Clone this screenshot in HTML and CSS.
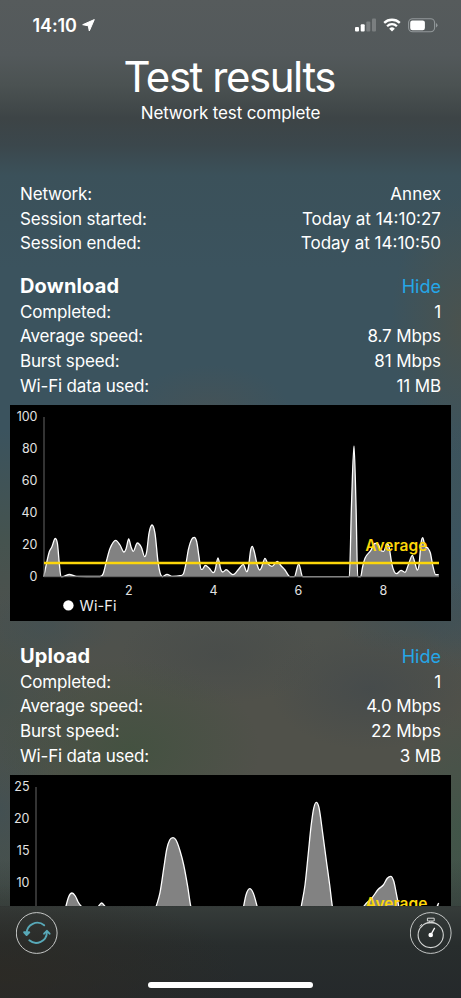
FILE: index.html
```html
<!DOCTYPE html>
<html lang="en">
<head>
<meta charset="utf-8">
<meta name="viewport" content="width=device-width, initial-scale=1">
<title>Test results</title>
<link rel="stylesheet" href="styles.css">
</head>
<body>
<div class="screen">
  <div class="statusbar">
    <div class="clock">
      <span>14:10</span>
      <svg width="13" height="13" viewBox="0 0 13 13"><path d="M12.3.6 7.300 12 6.300 6.800.7 5.700Z" fill="#fff" stroke="#fff" stroke-width="1" stroke-linejoin="round"/></svg>
    </div>
    <div class="indicators">
      <svg width="22" height="14" viewBox="0 0 22 14" fill="#fff"><rect x="0" y="9" width="4" height="4.6" rx="1"/><rect x="5.7" y="6.3" width="4" height="7.3" rx="1"/><g opacity=".22"><rect x="11.3" y="3.4" width="4" height="10.2" rx="1"/><rect x="17" y=".4" width="4" height="13.2" rx="1"/></g></svg>
      <svg class="wifi" width="18" height="14" viewBox="0 0 18 14"><g fill="none" stroke="#fff" stroke-width="2.3"><path d="M1.2 4.900a11.2 11.2 0 0 1 15.6 0"/><path d="M4.1 8.2a7 7 0 0 1 9.8 0"/></g><path d="M9 13.6 6.2 10.7a4 4 0 0 1 5.6 0Z" fill="#fff"/></svg>
      <svg width="30" height="15" viewBox="0 0 30 15"><rect x=".6" y=".8" width="26" height="13" rx="4" fill="none" stroke="#92989a" stroke-width="1.1"/><rect x="2.2" y="2.5" width="14.7" height="9.7" rx="2.2" fill="#fff"/><path d="M28 5v4.600q1.500-.8 1.500-2.300t-1.500-2.300Z" fill="#92989a"/></svg>
    </div>
  </div>

  <header class="title">
    <h1>Test results</h1>
    <p>Network test complete</p>
  </header>

  <main class="results">
    <dl class="rows session">
      <div><dt>Network:</dt><dd>Annex</dd></div>
      <div><dt>Session started:</dt><dd>Today at 14:10:27</dd></div>
      <div><dt>Session ended:</dt><dd>Today at 14:10:50</dd></div>
    </dl>

    <section>
      <div class="heading"><h2>Download</h2><a>Hide</a></div>
      <dl class="rows">
        <div><dt>Completed:</dt><dd>1</dd></div>
        <div><dt>Average speed:</dt><dd>8.7 Mbps</dd></div>
        <div><dt>Burst speed:</dt><dd>81 Mbps</dd></div>
        <div><dt>Wi-Fi data used:</dt><dd>11 MB</dd></div>
      </dl>
      <svg class="chart" viewBox="0 0 441 216">
        <path id="download-area" class="area"/>
        <path id="download-line" class="line"/>
        <path class="axis" d="M34 12V171.700H429"/>
        <g class="ticks y">
          <text x="27.500" y="16">100</text><text x="27.500" y="48">80</text><text x="27.500" y="80">60</text><text x="27.500" y="112">40</text><text x="27.500" y="144">20</text><text x="27.500" y="176">0</text>
        </g>
        <g class="ticks x">
          <text x="118.700" y="189.500">2</text><text x="203.500" y="189.500">4</text><text x="288.500" y="189.500">6</text><text x="373.300" y="189.500">8</text>
        </g>
        <path class="mean" d="M34 158H429"/>
        <text class="mean-label" x="355.300" y="145.600" textLength="62">Average</text>
        <circle cx="58.400" cy="200.400" r="5.200" fill="#fff"/>
        <text class="legend" x="69.500" y="205.600" textLength="37">Wi-Fi</text>
      </svg>
    </section>

    <section>
      <div class="heading"><h2>Upload</h2><a>Hide</a></div>
      <dl class="rows">
        <div><dt>Completed:</dt><dd>1</dd></div>
        <div><dt>Average speed:</dt><dd>4.0 Mbps</dd></div>
        <div><dt>Burst speed:</dt><dd>22 Mbps</dd></div>
        <div><dt>Wi-Fi data used:</dt><dd>3 MB</dd></div>
      </dl>
      <svg class="chart" viewBox="0 0 441 216">
        <path id="upload-area" class="area"/>
        <path id="upload-line" class="line"/>
        <path class="axis" d="M26 12V171.700H429"/>
        <g class="ticks y">
          <text x="19.500" y="16">25</text><text x="19.500" y="48">20</text><text x="19.500" y="80">15</text><text x="19.500" y="112">10</text>
        </g>
        <text class="mean-label" x="355.300" y="133.600" textLength="62">Average</text>
      </svg>
    </section>
  </main>

  <footer class="toolbar">
    <svg width="42" height="42" viewBox="0 0 42 42" fill="none">
      <circle cx="20.700" cy="21" r="20.400" stroke="#c6c8c7" stroke-width="1"/>
      <g stroke="#58a9b8" stroke-width="1.900" stroke-linecap="round" stroke-linejoin="round">
        <path d="M28.200 13.300A10.700 10.700 0 0 0 10.600 21.500"/><path d="M8.100 20.300 10.600 23 13.300 20.300Z"/>
        <path d="M13.300 28.300A10.700 10.700 0 0 0 30.900 20.300"/><path d="M28.100 21.700 30.900 18.800 33.600 21.700"/>
      </g>
    </svg>
    <svg width="42" height="42" viewBox="0 0 42 42" fill="none" stroke="#d4d6d5">
      <circle cx="20.700" cy="21" r="20.400" stroke-width=".9"/>
      <circle cx="20.700" cy="23" r="12.600" stroke-width="1.100"/>
      <path d="M17.400 6.200h6.800v2.800h-6.800ZM19.600 9v2M22 9v2M17.200 10.900h7.200M9.700 14.400l2.300-2.200M11.200 15.200l1.600-1.600" stroke-width="1"/>
      <path d="M20.700 23 24.700 15.900" stroke="#fff" stroke-width="1.300"/><circle cx="20.700" cy="23" r="2.300" fill="#fff" stroke="none"/>
    </svg>
  </footer>
  <div class="home"></div>
</div>
<script src="charts.js"></script>
</body>
</html>
```
FILE: styles.css
```css
* { box-sizing: border-box; margin: 0; padding: 0; }

body { font-family: Inter, "Liberation Sans", sans-serif; color: #fff; }

.screen {
  width: 461px;
  height: 998px;
  overflow: hidden;
  display: flex;
  flex-direction: column;
  background:
    linear-gradient(to bottom, transparent 860px, rgba(40, 44, 44, .35) 906px, transparent 907px),
    radial-gradient(ellipse 240px 90px at 0 975px, rgba(45, 42, 36, .8), transparent),
    linear-gradient(to bottom, transparent 906px, #363c3a 906px, #282d2d 945px, #25292b 998px),
    radial-gradient(ellipse 130px 90px at 130px 750px, rgba(64, 82, 62, .75), transparent),
    radial-gradient(ellipse 100px 60px at 370px 690px, rgba(68, 74, 76, .8), transparent),
    radial-gradient(ellipse 100px 50px at 220px 655px, rgba(72, 76, 74, .8), transparent),
    radial-gradient(ellipse 90px 40px at 420px 618px, rgba(62, 80, 86, .7), transparent),
    radial-gradient(ellipse 70px 40px at 45px 625px, rgba(64, 80, 84, .6), transparent),
    radial-gradient(ellipse 90px 100px at 0 700px, rgba(68, 80, 76, .8), transparent),
    radial-gradient(ellipse 70px 120px at 461px 830px, rgba(62, 86, 72, .8), transparent),
    radial-gradient(ellipse 60px 90px at 0 810px, rgba(64, 80, 84, .8), transparent),
    radial-gradient(ellipse 70px 130px at 461px 325px, rgba(78, 82, 74, .8), transparent),
    radial-gradient(ellipse 80px 45px at 210px 410px, rgba(78, 82, 80, .5), transparent),
    radial-gradient(ellipse 60px 130px at 461px 545px, rgba(58, 84, 98, .9), transparent),
    linear-gradient(to bottom, #565b5c 0, #53595b 55px, #4b5252 85px, #3d4446 118px, #3b474c 145px, #3b515a 175px, #3b535e 270px, #3b535e 430px, #45534f 540px, #4d514d 620px, #50514a 700px, #50514a 800px, #44504b 906px);
}

.statusbar {
  height: 54px;
  padding: 0 23px 0 32.500px;
  display: flex;
  justify-content: space-between;
}
.clock { display: flex; align-items: flex-start; gap: 5px; padding-top: 15px; font-size: 18px; line-height: 21px; font-weight: 600; letter-spacing: -.1px; }
.clock svg { margin-top: 3.500px; }
.indicators { display: flex; align-items: flex-start; padding-top: 18px; }
.wifi { margin: 0 7px 0 6.500px; }

.title { text-align: center; height: 128.300px; }
.title h1 { font-size: 42px; line-height: 46px; padding: 0 2.500px 2px 0; font-weight: 400; letter-spacing: -1.450px; }
.title p { font-size: 17px; line-height: 22px; letter-spacing: -.13px; }

.results { height: 723.700px; overflow: hidden; flex: none; }
.rows { padding: 0 20px; font-size: 17px; line-height: 24.600px; letter-spacing: -.17px; }
.rows > div { display: flex; justify-content: space-between; }
.rows dd { letter-spacing: -.1px; }
.rows.session dd { letter-spacing: 0; }
.session { margin-bottom: 17.100px; }

.heading { display: flex; justify-content: space-between; align-items: baseline; height: 26.700px; padding: 0 20px; line-height: 27px; }
.heading h2 { font-size: 20px; font-weight: 700; letter-spacing: .15px; }
.heading a { font-size: 18px; color: #25a7e8; }
section + section { margin-top: 22px; }

.chart { display: block; width: 441px; height: 216px; margin: 6.800px 10px 0; background: #000; }
.area { fill: #828282; }
.line { fill: none; stroke: #fff; stroke-width: 1.300; stroke-linejoin: round; }
.axis { fill: none; stroke: #666; stroke-width: 1; }
.ticks { font-size: 12.500px; fill: #e2e2e2; }
.ticks.y { text-anchor: end; }
.ticks.x { text-anchor: middle; }
.mean { stroke: #fcd60a; stroke-width: 2.600; }
.mean-label { font-size: 15.500px; font-weight: 600; fill: #fcd60a; }
.legend { font-size: 14.500px; fill: #eee; }

.toolbar { height: 48px; flex: none; padding: 6px 9.500px 0 16px; display: flex; justify-content: space-between; }
.home { width: 165px; height: 6px; margin: 28px auto 0 148px; border-radius: 3px; background: #fff; }
```
FILE: charts.js
```js
// Sample points in chart units; the curve between them is a monotone cubic.
const series = {
  download: [
    [33.7,171.7],[39.3,146.7],[41.7,142.3],[45.3,133.5],[47.5,139],[49.3,158.5],[51,171.7],[54,171.3],[59.3,169.5],
    [66.7,171.3],[90,171.5],[93.3,168.5],[96.7,155],[100,143.5],[105.7,135.3],[110,140],[114,147],[116,144],
    [118.7,134],[121,141.7],[123.3,146.3],[127.3,138],[131.3,142.3],[134.7,151.7],[136.7,146.7],[139,128.3],
    [142,120],[145,128.3],[148,156.7],[150,167.7],[152.3,171.7],[157,169.3],[162,171.3],[170,170.7],[173.3,169],
    [176,158.3],[178.3,145],[181.7,134.3],[184.3,132.3],[186.7,136.7],[189,151.7],[191,164.3],[192.3,164.3],
    [195.3,160.3],[199.3,163.3],[203.3,167.7],[205,165.5],[208,153],[210.7,164.3],[212.7,167],[216.3,164.7],
    [220,167.7],[223,169.7],[229,163.7],[233.3,159.3],[236.7,166.7],[238.3,163],[240.7,145],[242.3,141.3],
    [244.3,146.7],[247.3,160.3],[249.7,165],[251.3,163],[255,153.3],[257.7,158.3],[262,161.3],[267.3,156.3],
    [271,160.7],[275,165],[280,171.7],[284.3,171.7],[288.7,159],[292.7,171.7],[339.3,171.7],[341.5,100],[344,41],
    [346,100],[347.7,171.7],[350.7,171.7],[352.3,163.3],[355,153.3],[360.7,145.7],[365,138.3],[368.3,139.5],
    [371,145.7],[373.7,146.3],[377,139],[379,141.7],[381.7,158.3],[384.3,166.7],[386.7,168.7],[391,165.3],
    [395,167.3],[398.3,160],[402.3,150.3],[405,158.3],[407.3,165],[409,160],[411,138.3],[412.7,132.7],
    [415,141],[417.7,143],[420.3,147.7],[423,161.7],[425.7,169.7],[428.7,169.7]
  ],
  upload: [
    [26,171.7],[50,160],[56,131],[58.7,121.7],[62,118],[65.3,121],[68,126.7],[71,131],[80,138],[88.7,131],
    [91.7,128],[94.7,131],[115,165],[138,160],[146.3,131],[150,117.7],[154,91.7],[156.7,74.3],[159.7,65],
    [163,62.7],[166,65],[170,75.7],[173.7,90],[177.7,111.7],[180.7,131],[190,165],[228,160],[233.7,131],
    [236,120],[239.7,113.7],[243.3,118.3],[247,131],[255,165],[285,165],[291.3,131],[295,110],[298.3,78.3],
    [301,51.7],[303.7,33.3],[306.3,27.3],[309,32.7],[312.7,58.3],[316.7,88.3],[319.7,110],[322.3,131],
    [330,165],[345,150],[354,131],[361.7,123.3],[368.3,114.3],[373.3,110],[377.3,103.3],[380.7,101.3],
    [383.7,106],[386.3,118.3],[388.7,131],[395,165],[420,165],[427.3,131],[428.7,128]
  ]
};

function curve(p) {
  const slope = p.slice(1).map((q, i) => (q[1] - p[i][1]) / (q[0] - p[i][0]));
  const tangent = p.map((_, i) => {
    const a = slope[i - 1], b = slope[i];
    if (a === undefined) return b;
    if (b === undefined) return a;
    if (a * b <= 0) return 0;
    return Math.sign(a) * Math.min(Math.abs(a + b) / 2, 3 * Math.abs(a), 3 * Math.abs(b));
  });
  let d = `M${p[0]}`;
  for (let i = 1; i < p.length; i++) {
    const [x0, y0] = p[i - 1], [x1, y1] = p[i], h = (x1 - x0) / 3;
    d += `C${x0 + h},${y0 + h * tangent[i - 1]} ${x1 - h},${y1 - h * tangent[i]} ${x1},${y1}`;
  }
  return d;
}

for (const id in series) {
  const d = curve(series[id]);
  document.getElementById(id + "-line").setAttribute("d", d);
  document.getElementById(id + "-area").setAttribute("d", d + "V171.7H" + series[id][0][0] + "Z");
}
```
